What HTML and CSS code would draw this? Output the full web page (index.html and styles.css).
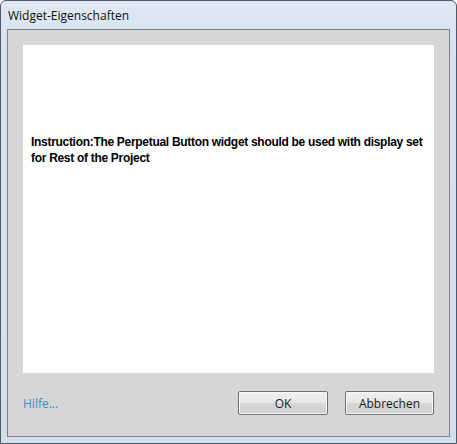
FILE: index.html
```html
<!DOCTYPE html>
<html>
<head>
<meta charset="utf-8">
<link rel="stylesheet" href="styles.css">
</head>
<body>
<div class="window">
  <div class="titlebar">Widget-Eigenschaften</div>
  <div class="client">
    <div class="panel">
      <p class="instruction">Instruction:The Perpetual Button widget should be used with display set for Rest of the Project</p>
    </div>
    <div class="footer">
      <a class="help">Hilfe...</a>
      <div class="buttons">
        <button class="btn ok">OK</button>
        <button class="btn cancel">Abbrechen</button>
      </div>
    </div>
  </div>
</div>
</body>
</html>
```
FILE: styles.css
```css
html, body {
  margin: 0;
  padding: 0;
  background: #ffffff;
}
.window {
  width: 457px;
  height: 444px;
  box-sizing: border-box;
  border: 1px solid #4f5a68;
  border-radius: 6px 6px 0 0;
  background: linear-gradient(#dfe8f3, #d6e1ee 60px, #d4dfec);
  display: flex;
  flex-direction: column;
  overflow: hidden;
}
.titlebar {
  height: 28px;
  padding-left: 7px;
  display: flex;
  align-items: center;
  font-family: "Open Sans", "Noto Sans", sans-serif;
  font-size: 12px;
  color: #111;
  box-sizing: border-box;
  padding-top: 1px;
}
.client {
  flex: 1;
  margin: 0 6px 6px 6px;
  border: 1px solid #7b838d;
  background: #d6d6d6;
  display: flex;
  flex-direction: column;
  min-height: 0;
}
.panel {
  margin: 15px 15px 0 15px;
  height: 328px;
  background: #ffffff;
  box-sizing: border-box;
  padding: 89px 8px 0 8px;
}
.instruction {
  margin: 0;
  font-family: "Liberation Sans", Arial, sans-serif;
  font-weight: bold;
  font-size: 12px;
  line-height: 16px;
  color: #000;
  letter-spacing: -0.3px;
  -webkit-font-smoothing: none;
}
.footer {
  display: flex;
  align-items: center;
  justify-content: space-between;
  margin: 18px 15px 0 15px;
}
.help {
  font-family: "Open Sans", "Noto Sans", sans-serif;
  font-size: 12px;
  color: #3a8ad6;
  cursor: pointer;
}
.buttons {
  display: flex;
  gap: 17px;
}
.btn {
  height: 24px;
  box-sizing: border-box;
  border: 1px solid #707070;
  border-radius: 2px;
  background: linear-gradient(#f0f0f0, #e6e6e6 50%, #d7d7d7 52%, #cfcfcf);
  box-shadow: inset 0 0 0 1px #f8f8f8;
  font-family: "Open Sans", "Noto Sans", sans-serif;
  font-size: 12px;
  color: #1a1a1a;
  padding: 0;
}
.ok { width: 90px; }
.cancel { width: 89px; }
```
